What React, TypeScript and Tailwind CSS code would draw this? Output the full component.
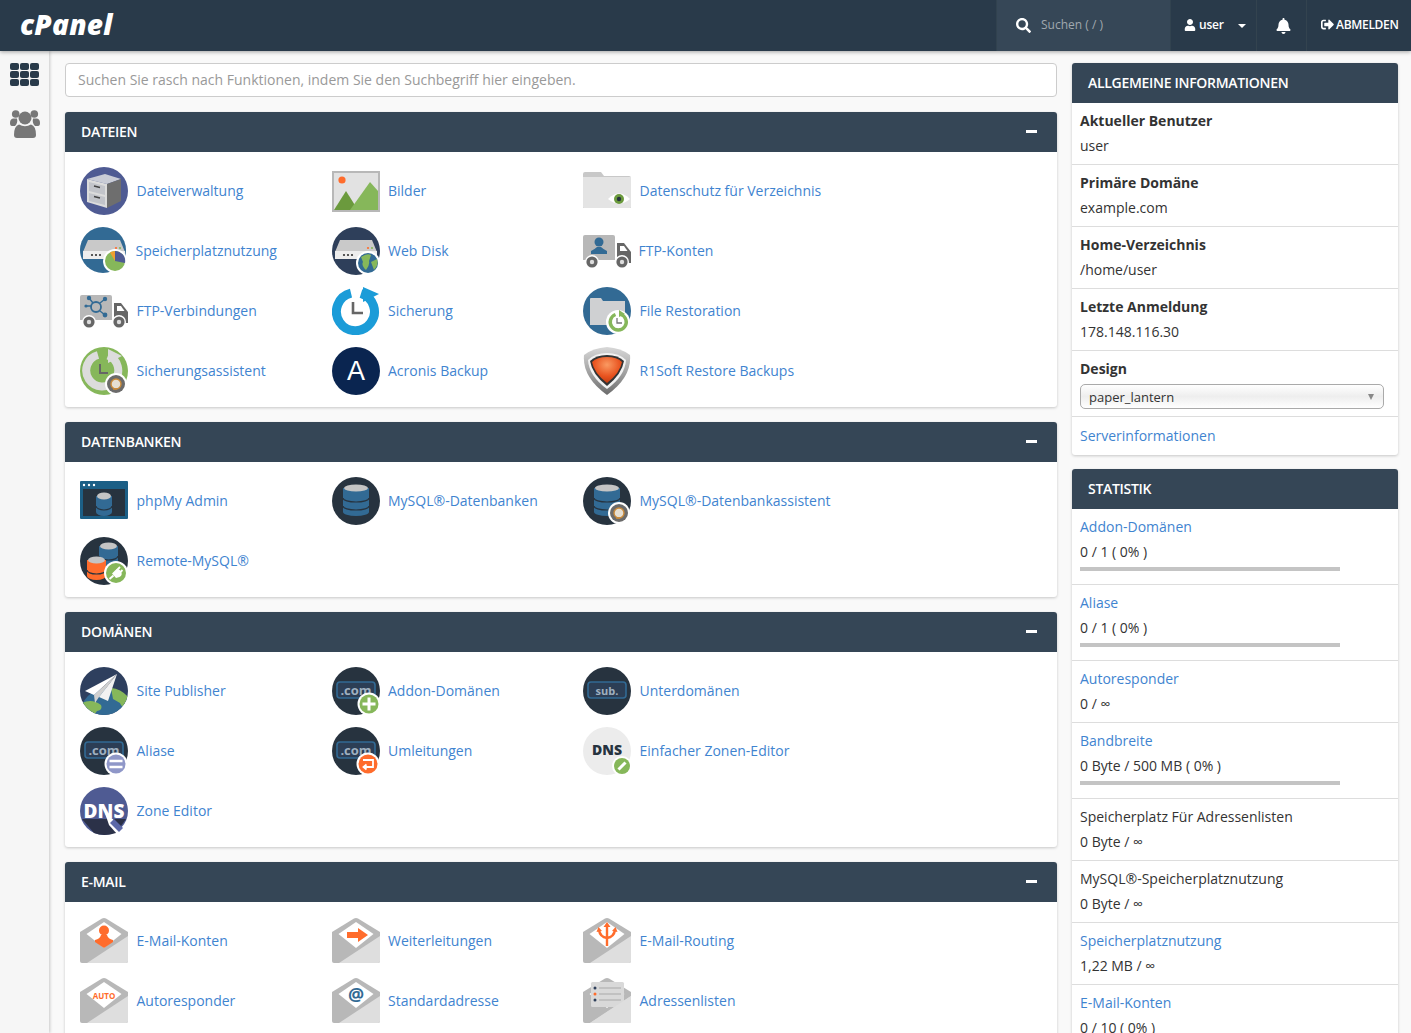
import type { ReactNode } from "react";
import { FaBell, FaSearch, FaSignOutAlt, FaUser } from "react-icons/fa";

const BLUE = "#326a94";
const DARK = "#27333f";
const GREEN = "#86b75a";
const ORANGE = "#ff6c2c";
const GREY = "#b8b8b8";
const LIGHT = "#dedede";

function Svg({ children }: { children: ReactNode }) {
  return (
    <svg viewBox="0 0 48 48" className="w-12 h-12 shrink-0">
      {children}
    </svg>
  );
}

// white ring with something on top, sits in the lower right corner of an icon
function Badge({ fill, cx = 35, cy = 36, r = 11, children }: { fill: string; cx?: number; cy?: number; r?: number; children?: ReactNode }) {
  return (
    <g>
      <circle cx={cx} cy={cy} r={r + 2} fill="#fff" />
      <circle cx={cx} cy={cy} r={r} fill={fill} />
      {children}
    </g>
  );
}

function Server() {
  return (
    <g>
      <path d="M3 25 L8 13 H40 L45 25 Z" fill="#c9c9c9" />
      <rect x="3" y="24" width="42" height="8" fill="#ededed" />
      <circle cx="12" cy="28" r="1.1" fill="#333" />
      <circle cx="16" cy="28" r="1.1" fill="#333" />
      <circle cx="20" cy="28" r="1.1" fill="#333" />
      <circle cx="36" cy="21" r="1.1" fill={ORANGE} />
      <circle cx="40" cy="21" r="1.1" fill={GREEN} />
    </g>
  );
}

function Headset({ cx = 36, cy = 37 }: { cx?: number; cy?: number }) {
  return (
    <Badge fill="#6b6b6b" cx={cx} cy={cy} r={9}>
      <circle cx={cx} cy={cy} r={5} fill="#e6dfd2" stroke="#c98a3a" strokeWidth="1.4" />
      <path d={`M${cx - 3} ${cy + 5} h4`} stroke="#c98a3a" strokeWidth="1.5" />
    </Badge>
  );
}

function Truck({ children }: { children: ReactNode }) {
  return (
    <Svg>
      <path d="M0 10 a2 2 0 0 1 2-2 H30 a2 2 0 0 1 2 2 V33 H0 Z" fill={GREY} />
      <path d="M34 16 H41 L48 25 V36 H34 Z" fill="#666" />
      <path d="M37 19 H41 L44.5 24 H37 Z" fill="#fff" />
      <circle cx="9" cy="35" r="7" fill="#fff" />
      <circle cx="9" cy="35" r="5.6" fill="#666" />
      <circle cx="9" cy="35" r="2.2" fill="#ddd" />
      <circle cx="39" cy="35" r="7" fill="#fff" />
      <circle cx="39" cy="35" r="5.6" fill="#666" />
      <circle cx="39" cy="35" r="2.2" fill="#ddd" />
      {children}
    </Svg>
  );
}

function Envelope({ children }: { children?: ReactNode }) {
  return (
    <Svg>
      <path d="M0 15 L22 1.5 Q24 0.5 26 1.5 L48 15 V44 a2 2 0 0 1-2 2 H2 a2 2 0 0 1-2-2 Z" fill={GREY} />
      <path d="M6.5 17 L24 5 L41.5 17 L24 31 Z" fill="#fff" />
      <path d="M7 46 L48 19 V44 a2 2 0 0 1-2 2 Z" fill={LIGHT} />
      {children}
    </Svg>
  );
}

function Cylinder({ x, y, w, fill, rows = 3 }: { x: number; y: number; w: number; fill: string; rows?: number }) {
  const h = rows * 8;
  return (
    <g>
      <path d={`M${x} ${y} V${y + h} a${w / 2} 4 0 0 0 ${w} 0 V${y} Z`} fill={fill} />
      {rows > 1 && <path d={`M${x} ${y + 10} a${w / 2} 4 0 0 0 ${w} 0`} fill="none" stroke={DARK} strokeWidth="1.2" />}
      {rows > 2 && <path d={`M${x} ${y + 18} a${w / 2} 4 0 0 0 ${w} 0`} fill="none" stroke={DARK} strokeWidth="1.2" />}
      <ellipse cx={x + w / 2} cy={y} rx={w / 2 - 1} ry="3.6" fill="#c4c4c4" />
    </g>
  );
}

function Com({ children }: { children: ReactNode }) {
  return (
    <Svg>
      <circle cx="24" cy="24" r="24" fill={DARK} />
      <rect x="5" y="15" width="38" height="16" rx="3" fill="#2c3e55" stroke={BLUE} strokeWidth="1.6" />
      <text x="24" y="28" textAnchor="middle" fontFamily="Open Sans" fontWeight="700" fontSize="13" fill="#9fb0c0">.com</text>
      {children}
    </Svg>
  );
}

const icons: Record<string, ReactNode> = {
  files: (
    <Svg>
      <circle cx="24" cy="24" r="24" fill="#4f5b93" />
      <path d="M7 12 L25 7 L41 12 L27 17 Z" fill="#c9ccd6" />
      <path d="M7 12 L27 17 V41 L7 35 Z" fill="#dcdcdc" />
      <path d="M27 17 L41 12 V34 L27 41 Z" fill="#6e6e6e" />
      <path d="M9 15 L25 19 V28 L9 24 Z M9 26 L25 30 V38 L9 34 Z" fill="#c2c4ca" />
      <path d="M14 19 L20 20.5 M14 29.5 L20 31" stroke="#444" strokeWidth="1.4" />
    </Svg>
  ),
  images: (
    <Svg>
      <rect x="1" y="5" width="46" height="39" fill="#e2e2e2" stroke={GREY} strokeWidth="2" />
      <circle cx="10" cy="13" r="3.6" fill={ORANGE} />
      <path d="M2 43 L14 24 L26 43 Z" fill="#6b9a3d" />
      <path d="M18 43 L38 15 L46 24 V43 Z" fill={GREEN} />
    </Svg>
  ),
  privacy: (
    <Svg>
      <path d="M0 7 a2 2 0 0 1 2-2 H18 L21 9 H46 a2 2 0 0 1 2 2 V41 H0 Z" fill="#c8c8c8" />
      <path d="M0 10 H48 V40 a1 1 0 0 1-1 1 H1 a1 1 0 0 1-1-1 Z" fill="#e4e4e4" />
      <path d="M25 32 Q36 21 47 32 Q36 41 25 32 Z" fill="#fff" />
      <circle cx="36" cy="32" r="5" fill="#6b9a3d" />
      <circle cx="36" cy="32" r="2.2" fill="#26333f" />
    </Svg>
  ),
  usage: (
    <Svg>
      <circle cx="23" cy="23" r="23" fill={BLUE} />
      <Server />
      <Badge fill={GREEN} cx={35} cy={34} r={10}>
        <path d="M35 34 V24 A10 10 0 0 1 45 36 Z" fill="#4f5b93" />
        <path d="M35 34 V24 A10 10 0 0 0 30 25.5 Z" fill="#f0a030" />
      </Badge>
    </Svg>
  ),
  webdisk: (
    <Svg>
      <circle cx="24" cy="24" r="24" fill="#2e3f5a" />
      <Server />
      <Badge fill={BLUE} cx={36} cy={36} r={10}>
        <path d="M29 30 Q35 26 39 28 L37 34 Q38 38 34 43 Q29 38 31 35 Z M39 35 L45 32 Q47 38 42 43 Z" fill={GREEN} />
      </Badge>
    </Svg>
  ),
  ftpaccounts: (
    <Truck>
      <circle cx="16" cy="15" r="4.5" fill={BLUE} />
      <path d="M8 27 V24 Q12 22 14 20 H18 Q20 22 24 24 V27 Z" fill={BLUE} />
    </Truck>
  ),
  ftpconn: (
    <Truck>
      <g stroke={BLUE} strokeWidth="1.4" fill="none">
        <circle cx="16" cy="20" r="5" strokeWidth="1.8" />
        <path d="M6 19 H11 M9 11 L13 16 M20 16 L25 12 M20 24 L25 28" />
      </g>
      <g fill={BLUE}>
        <circle cx="6" cy="19" r="1.6" />
        <circle cx="9" cy="11" r="2.2" />
        <circle cx="25" cy="12" r="2.2" />
        <circle cx="25" cy="28" r="2.4" />
      </g>
    </Truck>
  ),
  backup: (
    <Svg>
      <path d="M29 6.5 A19 19 0 1 1 19 6.2" fill="none" stroke="#1b9cd8" strokeWidth="9" />
      <path d="M31 0 L47 7 L31 15 Z" fill="#1b9cd8" />
      <path d="M21 15 V26 H31" fill="none" stroke="#666" strokeWidth="2.6" />
    </Svg>
  ),
  restore: (
    <Svg>
      <circle cx="24" cy="24" r="24" fill={BLUE} />
      <path d="M7 12 a1 1 0 0 1 1-1 H18 L20 14 H42 V38 H7 Z" fill="#cfd0d2" />
      <Badge fill="#fff" cx={35} cy={35} r={10}>
        <path d="M38 27.5 A8 8 0 1 1 32.5 27.5" fill="none" stroke={GREEN} strokeWidth="3.4" />
        <path d="M36 23 L42 27 L36 30 Z" fill={GREEN} />
        <path d="M34 31 V36 H39" fill="none" stroke="#777" strokeWidth="1.3" />
      </Badge>
    </Svg>
  ),
  wizard: (
    <Svg>
      <circle cx="24" cy="24" r="24" fill={GREEN} />
      <path d="M28 8.5 A16 16 0 1 1 18 8" fill="none" stroke="#dcdcdc" strokeWidth="8" />
      <path d="M28 2 L42 9 L28 16 Z" fill="#dcdcdc" />
      <path d="M20 17 V26 H28" fill="none" stroke="#666" strokeWidth="2" />
      <Headset />
    </Svg>
  ),
  acronis: (
    <Svg>
      <circle cx="24" cy="24" r="24" fill="#0a2550" />
      <text x="24" y="33" textAnchor="middle" fontFamily="Liberation Sans" fontSize="27" fill="#fff">A</text>
    </Svg>
  ),
  r1soft: (
    <Svg>
      <defs>
        <linearGradient id="shieldRim" x1="0" y1="0" x2="0" y2="1">
          <stop offset="0" stopColor="#d8d8d8" />
          <stop offset="0.6" stopColor="#9a9a9a" />
          <stop offset="1" stopColor="#6c6c6c" />
        </linearGradient>
        <radialGradient id="shieldCore" cx="0.5" cy="0.3" r="0.75">
          <stop offset="0" stopColor="#fa9a62" />
          <stop offset="0.6" stopColor="#e8521e" />
          <stop offset="1" stopColor="#b93a10" />
        </radialGradient>
      </defs>
      <path d="M24 0 Q38 1 47 8 Q49 30 24 48 Q-1 30 1 8 Q10 1 24 0 Z" fill="url(#shieldRim)" />
      <path d="M24 6 Q36 6 43 13 Q42 29 24 42 Q6 29 5 13 Q12 6 24 6 Z" fill="#f2f2f2" />
      <path d="M24 8 Q35 8 41 14 Q39 27 24 39 Q9 27 7 14 Q13 8 24 8 Z" fill="#333" />
      <path d="M24 10 Q34 10 39 15 Q37 26 24 36 Q11 26 9 15 Q14 10 24 10 Z" fill="url(#shieldCore)" />
    </Svg>
  ),
  phpmyadmin: (
    <Svg>
      <rect y="0" x="0" width="48" height="38" rx="1" transform="translate(0 4)" fill="#1c5f86" />
      <rect x="3" y="12" width="42" height="27" fill={DARK} />
      <circle cx="4" cy="8" r="1.2" fill="#fff" />
      <circle cx="9" cy="8" r="1.2" fill="#fff" />
      <circle cx="14" cy="8" r="1.2" fill="#fff" />
      <Cylinder x={16} y={19} w={16} fill={BLUE} rows={2} />
    </Svg>
  ),
  mysql: (
    <Svg>
      <circle cx="24" cy="24" r="24" fill={DARK} />
      <Cylinder x={11} y={11} w={26} fill={BLUE} />
    </Svg>
  ),
  mysqlwizard: (
    <Svg>
      <circle cx="24" cy="24" r="24" fill={DARK} />
      <Cylinder x={11} y={11} w={26} fill={BLUE} />
      <Headset cx={36} cy={36} />
    </Svg>
  ),
  remotemysql: (
    <Svg>
      <circle cx="24" cy="24" r="24" fill={DARK} />
      <Cylinder x={19} y={9} w={19} fill={BLUE} rows={2} />
      <Cylinder x={7} y={23} w={19} fill={ORANGE} rows={2} />
      <Badge fill={GREEN} cx={36} cy={36} r={10}>
        <path d="M29.5 42 L33.5 38.5" stroke="#fff" strokeWidth="2" />
        <path d="M32 36.5 L35.5 33 A4 4 0 0 1 39.5 40 L36 41 Z" fill="#fff" />
        <path d="M36.5 33.5 L40 30 M39 36.5 L42.5 33" stroke="#fff" strokeWidth="1.8" />
      </Badge>
    </Svg>
  ),
  publisher: (
    <Svg>
      <defs>
        <clipPath id="globeClip">
          <circle cx="24" cy="24" r="24" />
        </clipPath>
      </defs>
      <circle cx="24" cy="24" r="24" fill="#2e3f5e" />
      <g clipPath="url(#globeClip)">
        <circle cx="27" cy="48" r="27" fill={BLUE} />
        <path d="M31 21 Q42 22 50 32 L48 38 Q42 42 40 36 L33 32 Z M2 36 Q12 31 21 38 Q23 43 17 44 L14 48 Q6 46 2 36 Z" fill={GREEN} />
      </g>
      <path d="M37 7 L5 24 L14 28 Z" fill="#fff" />
      <path d="M37 7 L14 28 L15 36 L19 30 Z" fill="#d0d0d0" />
      <path d="M37 7 L19 30 L28 34 Z" fill="#f2f2f2" />
    </Svg>
  ),
  addon: (
    <Com>
      <Badge fill={GREEN} cx={37} cy={37} r={9.5}>
        <path d="M37 30.5 V43.5 M30.5 37 H43.5" stroke="#fff" strokeWidth="3" />
      </Badge>
    </Com>
  ),
  alias: (
    <Com>
      <Badge fill="#8f97c8" cx={36} cy={37} r={9.5}>
        <path d="M29.5 34 H42.5 M29.5 40 H42.5" stroke="#fff" strokeWidth="2.6" />
      </Badge>
    </Com>
  ),
  redirect: (
    <Com>
      <Badge fill={ORANGE} cx={36} cy={37} r={9.5}>
        <path d="M31 33 H41 V40 H32 M34.5 37.5 L31.5 40 L34.5 42.5" fill="none" stroke="#fff" strokeWidth="1.8" />
      </Badge>
    </Com>
  ),
  sub: (
    <Svg>
      <circle cx="24" cy="24" r="24" fill={DARK} />
      <rect x="5" y="15" width="38" height="16" rx="3" fill="#2c3e55" stroke={BLUE} strokeWidth="1.6" />
      <text x="24" y="28" textAnchor="middle" fontFamily="Open Sans" fontWeight="700" fontSize="11" fill="#9fb0c0">sub.</text>
    </Svg>
  ),
  dns: (
    <Svg>
      <circle cx="24" cy="24" r="24" fill="#ececec" />
      <text x="24" y="28" textAnchor="middle" fontFamily="Open Sans" fontWeight="800" fontSize="14" fill="#26333f">DNS</text>
      <Badge fill={GREEN} cx={39} cy={39} r={8}>
        <path d="M35.5 42.5 L42.5 35.5" stroke="#fff" strokeWidth="3" />
      </Badge>
    </Svg>
  ),
  zone: (
    <Svg>
      <circle cx="24" cy="24" r="24" fill="#4f5b93" />
      <path d="M2 32 H46 L36 46 Q24 50 14 46 Z" fill="#2b3148" />
      <text x="24" y="31" textAnchor="middle" fontFamily="Open Sans" fontWeight="800" fontSize="19" fill="#fff">DNS</text>
      <path d="M25 26 L29 38 L37 47 L43 42 L34 33 Z" fill="#fff" />
      <path d="M30 36 L39 45 L43 41 L34 32 Z" fill="#5c68a8" />
    </Svg>
  ),
  mailaccount: (
    <Envelope>
      <circle cx="24" cy="13.5" r="5" fill={ORANGE} />
      <path d="M15 25 V23 Q20 22 21 18 H27 Q28 22 33 23 V25 L24 31 Z" fill={ORANGE} />
    </Envelope>
  ),
  forward: (
    <Envelope>
      <path d="M15 15 H26 V11 L36 18 L26 25 V21 H15 Z" fill={ORANGE} />
    </Envelope>
  ),
  routing: (
    <Envelope>
      <path d="M24 29 V8 M24 21 Q17 20 16 13 M24 21 Q31 20 32 13" fill="none" stroke={ORANGE} strokeWidth="2.4" />
      <path d="M20.5 10 L24 5 L27.5 10 Z M13.5 15 L15.5 10 L19 14 Z M29 14 L32.5 10 L34.5 15 Z" fill={ORANGE} />
    </Envelope>
  ),
  autoresponder: (
    <Envelope>
      <text x="24" y="22" textAnchor="middle" fontFamily="Open Sans" fontWeight="700" fontSize="8" fill={ORANGE}>AUTO</text>
    </Envelope>
  ),
  defaultaddr: (
    <Envelope>
      <text x="24" y="24" textAnchor="middle" fontFamily="Open Sans" fontWeight="700" fontSize="18" fill={BLUE}>@</text>
    </Envelope>
  ),
  lists: (
    <Envelope>
      <rect x="8" y="5" width="33" height="25" rx="1.5" fill="#d9d9d9" />
      <circle cx="12" cy="11" r="1.5" fill="#2e3f5a" />
      <circle cx="12" cy="17" r="1.5" fill={ORANGE} />
      <circle cx="12" cy="23" r="1.5" fill="#2e3f5a" />
      <path d="M16 11 H38 M16 17 H38 M16 23 H38" stroke="#aaa" strokeWidth="1.2" />
      <path d="M7 46 L48 19 V44 a2 2 0 0 1-2 2 Z" fill={LIGHT} />
    </Envelope>
  ),
};

type Item = { icon: string; label: string; tight?: boolean };

const sections: { title: string; items: Item[] }[] = [
  {
    title: "DATEIEN",
    items: [
      { icon: "files", label: "Dateiverwaltung" },
      { icon: "images", label: "Bilder" },
      { icon: "privacy", label: "Datenschutz für Verzeichnis" },
      { icon: "usage", label: "Speicherplatznutzung", tight: true },
      { icon: "webdisk", label: "Web Disk" },
      { icon: "ftpaccounts", label: "FTP-Konten", tight: true },
      { icon: "ftpconn", label: "FTP-Verbindungen" },
      { icon: "backup", label: "Sicherung" },
      { icon: "restore", label: "File Restoration" },
      { icon: "wizard", label: "Sicherungsassistent" },
      { icon: "acronis", label: "Acronis Backup" },
      { icon: "r1soft", label: "R1Soft Restore Backups" },
    ],
  },
  {
    title: "DATENBANKEN",
    items: [
      { icon: "phpmyadmin", label: "phpMy Admin" },
      { icon: "mysql", label: "MySQL®-Datenbanken" },
      { icon: "mysqlwizard", label: "MySQL®-Datenbankassistent" },
      { icon: "remotemysql", label: "Remote-MySQL®" },
    ],
  },
  {
    title: "DOMÄNEN",
    items: [
      { icon: "publisher", label: "Site Publisher" },
      { icon: "addon", label: "Addon-Domänen" },
      { icon: "sub", label: "Unterdomänen" },
      { icon: "alias", label: "Aliase" },
      { icon: "redirect", label: "Umleitungen" },
      { icon: "dns", label: "Einfacher Zonen-Editor" },
      { icon: "zone", label: "Zone Editor" },
    ],
  },
  {
    title: "E-MAIL",
    items: [
      { icon: "mailaccount", label: "E-Mail-Konten" },
      { icon: "forward", label: "Weiterleitungen" },
      { icon: "routing", label: "E-Mail-Routing" },
      { icon: "autoresponder", label: "Autoresponder" },
      { icon: "defaultaddr", label: "Standardadresse" },
      { icon: "lists", label: "Adressenlisten" },
    ],
  },
];

const infos = [
  { label: "Aktueller Benutzer", value: "user" },
  { label: "Primäre Domäne", value: "example.com" },
  { label: "Home-Verzeichnis", value: "/home/user" },
  { label: "Letzte Anmeldung", value: "178.148.116.30" },
];

const stats: { label: string; value: string; link?: boolean; bar?: boolean }[] = [
  { label: "Addon-Domänen", value: "0 / 1 ( 0% )", link: true, bar: true },
  { label: "Aliase", value: "0 / 1 ( 0% )", link: true, bar: true },
  { label: "Autoresponder", value: "0 / ∞", link: true },
  { label: "Bandbreite", value: "0 Byte / 500 MB ( 0% )", link: true, bar: true },
  { label: "Speicherplatz Für Adressenlisten", value: "0 Byte / ∞" },
  { label: "MySQL®-Speicherplatznutzung", value: "0 Byte / ∞" },
  { label: "Speicherplatznutzung", value: "1,22 MB / ∞", link: true },
  { label: "E-Mail-Konten", value: "0 / 10 ( 0% )", link: true, bar: true },
];

function Section({ title, items }: { title: string; items: Item[] }) {
  return (
    <section className="mb-[15px] bg-white rounded-[3px] shadow-[0_1px_3px_rgba(0,0,0,0.2)]">
      <div className="h-10 bg-[#354656] rounded-t-[3px] pl-4 pr-5 flex items-center justify-between">
        <h2 className="text-white text-sm font-semibold tracking-[-0.3px]">{title}</h2>
        <div className="w-[11px] h-[3px] mb-[2px] bg-white" />
      </div>
      <div className="pt-[15px] px-[15px] grid grid-cols-[251.5px_251.5px_1fr]">
        {items.map((item) => (
          <a key={item.label} className={`h-[60px] flex items-start ${item.tight ? "gap-[7.5px]" : "gap-[8.5px]"}`}>
            {icons[item.icon]}
            <span className="text-sm leading-[48px] text-[#3f84d0]">{item.label}</span>
          </a>
        ))}
      </div>
    </section>
  );
}

function SideHeading({ title }: { title: string }) {
  return (
    <div className="h-10 bg-[#354656] rounded-t-[3px] px-4 flex items-center">
      <h2 className="text-white text-sm font-semibold tracking-[-0.3px]">{title}</h2>
    </div>
  );
}

export default function App() {
  return (
    <div className="h-[1033px] overflow-hidden flex flex-col bg-[#f9f9f9] text-[#333] text-sm font-['Open_Sans',sans-serif]">
      <header className="h-[51px] shrink-0 bg-[#293a4a] flex items-stretch justify-between z-10 shadow-[0_1px_4px_rgba(0,0,0,0.35)]">
        <div className="pl-5 pt-[6px] text-white text-[28px] leading-9 font-extrabold italic tracking-[0.2px]">
          cPanel
        </div>
        <div className="flex items-stretch text-white">
          <div className="w-[175px] bg-[#364757] border-x border-[#31424f] flex items-center pl-[19px] gap-[10px]">
            <FaSearch className="w-[15px] h-[15px] shrink-0" />
            <span className="text-xs text-[#a0a8ae] pb-[2px]">Suchen ( / )</span>
          </div>
          <div className="w-[86px] border-r border-[#33434f] flex items-center pl-[13px]">
            <FaUser className="w-3 h-3 mb-[2px]" />
            <span className="ml-[3px] pb-[2px] text-xs font-semibold tracking-[-0.2px]">user</span>
            <span className="ml-[14px] border-x-[4px] border-x-transparent border-t-[4px] border-t-white" />
          </div>
          <div className="w-[50px] border-r border-[#33434f] flex items-center justify-center pl-[3px]">
            <FaBell className="w-[15px] h-4" />
          </div>
          <div className="w-[104px] flex items-center pl-[14px] gap-[2px]">
            <FaSignOutAlt className="w-[13px] h-[13px] shrink-0 mb-[2px]" />
            <span className="pb-[2px] text-xs font-semibold tracking-[-0.3px]">ABMELDEN</span>
          </div>
        </div>
      </header>

      <div className="flex flex-1 min-h-0">
        <aside className="w-[49px] shrink-0 bg-[#f6f6f6] shadow-[1px_0_3px_rgba(0,0,0,0.2)] flex flex-col items-center pt-3">
          <div className="w-[29px] grid grid-cols-3 gap-[1.5px]">
            {Array.from({ length: 9 }).map((_, i) => (
              <div key={i} className="h-[6.5px] rounded-[2px] bg-[#293a4a]" />
            ))}
          </div>
          <svg viewBox="0 0 30 28" className="w-[30px] h-7 mt-6 text-[#777]" fill="currentColor">
            <circle cx="5.7" cy="4" r="3.8" />
            <circle cx="24.3" cy="4" r="3.8" />
            <path d="M0 13 Q0 9 3 8.5 L7 8.5 Q8 13 5 16 H2 Q0 16 0 13 Z M30 13 Q30 9 27 8.5 L23 8.5 Q22 13 25 16 H28 Q30 16 30 13 Z" />
            <circle cx="15" cy="8" r="6.5" />
            <path d="M4 25 Q4 16 9 14.5 Q15 18 21 14.5 Q26 16 26 25 Q26 28 23 28 H7 Q4 28 4 25 Z" />
          </svg>
        </aside>

        <main className="flex-1 flex gap-[15px] pl-4 pr-[13px] pt-3">
          <div className="w-[992px] shrink-0">
            <input
              placeholder="Suchen Sie rasch nach Funktionen, indem Sie den Suchbegriff hier eingeben."
              className="w-full h-[34px] mb-[15px] px-3 pb-[2px] bg-white border border-[#ccc] rounded text-sm outline-none placeholder:text-[#999]"
            />
            {sections.map((s) => (
              <Section key={s.title} title={s.title} items={s.items} />
            ))}
          </div>

          <div className="w-[326px] shrink-0">
            <section className="mb-[14px] bg-white rounded-[3px] shadow-[0_1px_3px_rgba(0,0,0,0.2)]">
              <SideHeading title="ALLGEMEINE INFORMATIONEN" />
              {infos.map((row) => (
                <div key={row.label} className="px-2 pt-[5px] pb-[6px] border-b border-[#ddd] leading-[25px]">
                  <div className="font-bold">{row.label}</div>
                  <div>{row.value}</div>
                </div>
              ))}
              <div className="px-2 pt-[5px] pb-[7px] border-b border-[#ddd] leading-[25px]">
                <div className="font-bold">Design</div>
                <div className="relative mt-[3px] mr-[6px]">
                  <select className="appearance-none w-full h-[25px] px-2 border border-[#aaa] rounded-[5px] text-[13px] bg-linear-to-b from-white via-[#eee] to-white outline-none">
                    <option>paper_lantern</option>
                  </select>
                  <span className="absolute right-[10px] top-[10px] border-x-[3.5px] border-x-transparent border-t-[6px] border-t-[#888]" />
                </div>
              </div>
              <div className="px-2 pt-[6px] pb-[7px] leading-[25px]">
                <a className="text-[#3f84d0]">Serverinformationen</a>
              </div>
            </section>

            <section className="bg-white rounded-[3px] shadow-[0_1px_3px_rgba(0,0,0,0.2)]">
              <SideHeading title="STATISTIK" />
              {stats.map((row) => (
                <div key={row.label} className="px-2 pt-[5px] pb-[6px] border-b border-[#ddd] leading-[25px]">
                  <div className={row.link ? "text-[#3f84d0]" : ""}>{row.label}</div>
                  <div>{row.value}</div>
                  {row.bar && <div className="w-[260px] h-1 mt-[3px] mb-[7px] bg-[#c4c4c4]" />}
                </div>
              ))}
            </section>
          </div>
        </main>
      </div>
    </div>
  );
}
